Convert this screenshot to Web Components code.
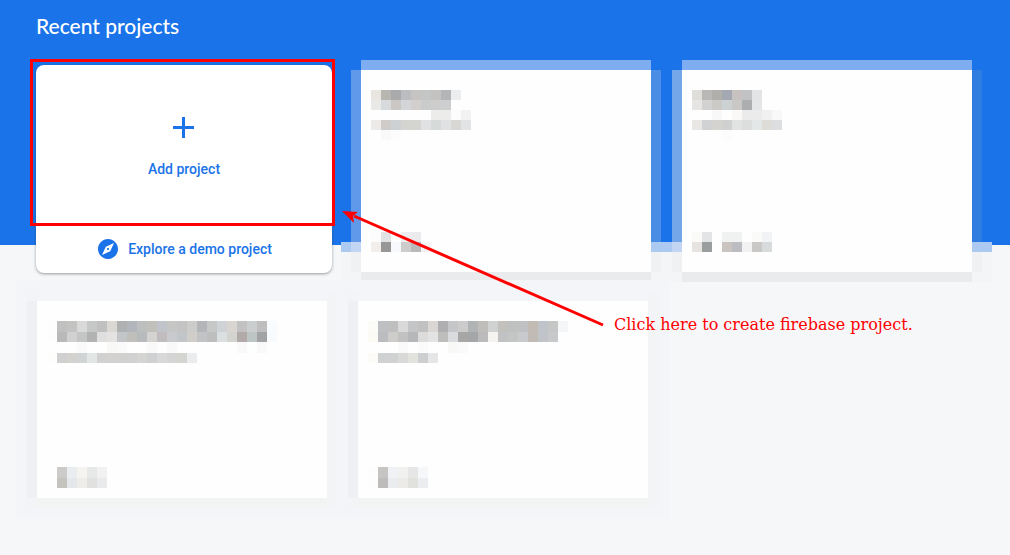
<!DOCTYPE html>
<html lang="en">
<head>
<meta charset="utf-8">
<meta name="viewport" content="width=device-width, initial-scale=1">
<title>Recent projects</title>
<style>
  body { margin: 0; min-height: 100vh; background: #f5f7f9; font-family: Roboto, "Liberation Sans", sans-serif; }
</style>
</head>
<body>
<recent-projects>
  <add-card></add-card>
  <project-card class="upper" style="--left:#6099ea;--right:#4a8de6">
    <pixel-mosaic rows="e9e5e1 b8b6b1 a8aaac bbbdc0 c6c4c2 c3c6c5 c3c2c0 b4b5b6 ecedee/e9e9e8 d8dbdd cac7c4 d4d5d8 d2cfcd cacccb cdcdce cdcecf/- - - - - - ecedea ecedea fcfcfc f2f2f2/ecebea d0ccc9 cdd1d3 d4d4d1 d4d4d1 e0e1e3 d6dad8 dfe1e3 d9d7d4 e1e3e5/- f9f9f9 fcfcfc"></pixel-mosaic>
    <pixel-mosaic slot="foot" rows="fcfcfc e1e2e3 - ecedee ebebed/f2eeeb 979798 f8f9fd cdccca b9b9ba f3f3f3"></pixel-mosaic>
  </project-card>
  <project-card class="upper" style="--left:#74a6ea;--right:#307de2">
    <pixel-mosaic rows="dfded9 b9b8b7 b1afac a3a8b2 c7c2bf c1c2c4 e2e4e6/e6e5e3 d2d2d2 cccac7 ccd1d3 c9c8c6 adaeb0 e4e6e8/- - f8f8f8 - faf9f7 ebebeb ebebeb f0f0f0 f8f8f8/e8e7e4 d1d2d4 d4d3d0 d0d0d0 e1e2e2 dcdddd e3e7e8 dedcd7 dcdee0/- - - fcfcfc"></pixel-mosaic>
    <pixel-mosaic slot="foot" rows="fafaf8 e2e4e5 - f0f1f1 f0f1f1 - fafaf8 f1f3f4/e7e3e0 9b9e9f - c9c4c0 bcbdc2 f2f2f2 c9c8c6 d8dbdc"></pixel-mosaic>
  </project-card>
  <project-card class="lower">
    <pixel-mosaic rows="fdfdfd c1c0c1 c3c3c1 d9d9d9 c6c7c7 c0c0c0 dbd7d3 aeb0b2 b2b5bc bdbebe c2c0ba c1c5cb c6c6c4 c3c4c3 cccdca b3b5b8 c6c7c7 d0d3d5 d9d5d1 c2c2c3 cbcecf bebebf f9fcfe/fdfdfd b9b9b9 d0d1d0 c4c5c5 b2b2b3 dfdfdf e4e3e1 c2c6c8 c1bfbc b8bbbd d5d3cf c1bdbf c8cacd c3c6c8 d1cdc9 c1c3c5 bebebf dae0e0 d3d3d0 b2aaa8 bdc4c4 a2a3a5 f7fbfe/- - - fafafa - - f8f8f6 fafafa - - f9f9f9 - f9f9f9 - - - - - - f9f9f9 fcfffe f9f9f9/fdfdfb cfd0cf d3d2cf d0d4d5 e2e6e4 d1d1d2 d3d2d0 d1d1d0 d1d1d1 d5d5d3 cfd0d2 d8d8d8 d5d5d5 d4d4d1 eaecee"></pixel-mosaic>
    <pixel-mosaic slot="foot" rows="- cccbca eaedef f6f4f1 e6e9e8 f1f1f1/- c4c3be e5e8ea efedea e1e1e0 e9eaec"></pixel-mosaic>
  </project-card>
  <project-card class="lower">
    <pixel-mosaic rows="fbfbf7 bdbfc2 bfbfbf d9d9da c4c5c6 c1c1c2 dad6d3 afafb1 c4c6c8 cccccd b1b4b4 c0bebb d0d1d1 c2c1be bfc1c0 bfc1c3 c1bbb3 bfc3ca c5c6c6 f4f6f8/fbfaf5 babcbf cecdca c1c2c1 b5b7b9 dedcda e3e3e4 bebebd d9dbde a8a7a5 a5a6a7 bbbbbc f5f4f0 c1c2c4 c3c6c5 c8cacd c0bcb5 c0c4c8 c6c8c9/- - - fafafa - fbfbfb - - f8f8f7 fafafa/fcfbf7 d0d1d3 d0d1d1 d9d9d8 e2e3dd cdcecf e6e6e6"></pixel-mosaic>
    <pixel-mosaic slot="foot" rows="fdfdfd c6c5c3 f1f2f5 f1f1ef e6e6e6 f5f7f8/fdfdfd bdbcba ebecf0 ecebe7 e1e1dd ecedf0"></pixel-mosaic>
  </project-card>
  <arrow-note slot="note">Click here to create firebase project.</arrow-note>
</recent-projects>

<script>
const define = (name, html, ready) => {
  const template = document.createElement('template');
  template.innerHTML = html;
  customElements.define(name, class extends HTMLElement {
    constructor() {
      super();
      this.attachShadow({ mode: 'open' }).append(template.content.cloneNode(true));
    }
    connectedCallback() { if (ready) ready(this); }
  });
};

// A small grid of coloured squares; rows are split by "/", cells by spaces, "-" is an empty cell.
define('pixel-mosaic', `
  <style>
    :host { display: block; }
    svg { display: block; shape-rendering: crispEdges; }
  </style>
  <svg preserveAspectRatio="none" aria-hidden="true"></svg>
`, host => {
  const svg = host.shadowRoot.querySelector('svg');
  const rows = host.getAttribute('rows').split('/').map(r => r.split(' '));
  const cols = Math.max(...rows.map(r => r.length));
  const lower = host.parentElement.classList.contains('lower');
  svg.setAttribute('viewBox', `0 0 ${cols} ${rows.length}`);
  svg.setAttribute('width', cols * 10);
  svg.setAttribute('height', rows.length * 10 + (lower ? rows.length >> 1 : 0));
  svg.innerHTML = rows.map((r, y) => r.map((c, x) =>
    c === '-' ? '' : `<rect x="${x}" y="${y}" width="1" height="1" fill="#${c}"/>`).join('')).join('');
});

define('project-card', `
  <style>
    :host { position: relative; display: grid; grid-template: 10px 1fr 10px / 10px 1fr 10px; }
    :host(.upper) { margin: -5px -8px -9px -6px; }
    :host(.lower) { margin: 0 -5px 0 -9px; min-height: 217px; background: #f3f4f6; box-shadow: 0 0 0 11px #f4f5f8, 0 -11px 0 0 #f1f2f5; }
    .top { grid-area: 1 / 2; background: #f4f5f8; }
    .left { grid-area: 2 / 1; background: #eff0f3; }
    .right { grid-area: 2 / 3; background: #f2f4f6; }
    .bottom { grid-area: 3 / 2; background: #f2f3f3; }
    :host(.upper) .top { background: #7eaef1; }
    :host(.upper) .left { background: linear-gradient(var(--left) 172px, #c2d6f4 172px 182px, #f0f1f3 182px); }
    :host(.upper) .right { background: linear-gradient(var(--right) 172px, #acc9f1 172px 182px, #f0f1f3 182px); }
    :host(.upper) .bottom { background: #eaebed; }
    .strip { display: none; }
    :host(.upper) .strip { display: block; position: absolute; inset: 182px -10px 0; background: linear-gradient(#acc9f1 10px, #f3f5f7 10px); }
    .body { grid-area: 2 / 2; position: relative; background: #fefefe; display: flex; flex-direction: column; justify-content: space-between; align-items: flex-start; padding: 20px 10px; }
    :host(.lower) .body { padding-bottom: 10px; }
    .top, .left, .right, .bottom { position: relative; }
  </style>
  <div class="strip"></div>
  <div class="top"></div><div class="left"></div>
  <div class="body"><slot></slot><slot name="foot"></slot></div>
  <div class="right"></div><div class="bottom"></div>
`);

define('add-card', `
  <style>
    :host { position: relative; z-index: 1; display: flex; flex-direction: column; min-height: 208px; border-radius: 8px; background: #fff; box-shadow: 0 1px 3px rgba(60, 64, 67, .5); }
    button, a { font: 500 14px/20px Roboto, "Liberation Sans", sans-serif; color: #1a73e8; }
    button { flex: 1; border: 0; padding: 6px 0 0; background: none; display: flex; flex-direction: column; align-items: center; justify-content: center; gap: 20px; cursor: pointer; }
    a { display: flex; align-items: center; justify-content: center; gap: 8px; height: 48px; text-decoration: none; }
    svg { display: block; fill: #1a73e8; }
    .mark { position: absolute; inset: -6px -3px 47px -6px; border: 3px solid #f00; pointer-events: none; }
  </style>
  <button type="button">
    <svg width="22" height="22" viewBox="0 0 22 22" aria-hidden="true"><path d="M9 0h3v9h9v3h-9v9H9v-9H0V9h9z"/></svg>
    <span>Add project</span>
  </button>
  <a href="#demo">
    <svg width="24" height="24" viewBox="0 0 24 24" aria-hidden="true"><path d="M12 10.9c-.61 0-1.1.49-1.1 1.1s.49 1.1 1.1 1.1c.61 0 1.1-.49 1.1-1.1s-.49-1.1-1.1-1.1zM12 2C6.48 2 2 6.48 2 12s4.48 10 10 10 10-4.48 10-10S17.52 2 12 2zm2.19 12.19L6 18l3.81-8.19L18 6l-3.81 8.19z"/></svg>
    <span>Explore a demo project</span>
  </a>
  <div class="mark"></div>
`);

define('arrow-note', `
  <style>
    :host { position: absolute; z-index: 2; left: 342px; top: 210px; display: flex; align-items: flex-end; gap: 8px; color: #f00; font: 16px/20px "DejaVu Serif", serif; white-space: nowrap; pointer-events: none; }
    svg { display: block; }
  </style>
  <svg width="264" height="125" viewBox="0 0 264 125" aria-hidden="true"><path d="M12 6 261 115" stroke="#f00" stroke-width="3" fill="none"/><path d="M0 1 16 2 11 6 12 13z" fill="#f00"/></svg>
  <span><slot></slot></span>
`);

define('recent-projects', `
  <style>
    :host { position: relative; display: block; background: linear-gradient(#1a73e8 245px, transparent 245px); padding: 12px 36px 47px; }
    h1 { margin: 0 0 25px; font: 500 21px/28px "Google Sans", Lato, sans-serif; color: #fff; }
    .grid { display: grid; grid-template-columns: repeat(3, minmax(0, 1fr)); gap: 18px 25px; }
  </style>
  <h1>Recent projects</h1>
  <div class="grid"><slot></slot></div>
  <slot name="note"></slot>
`);
</script>
</body>
</html>
